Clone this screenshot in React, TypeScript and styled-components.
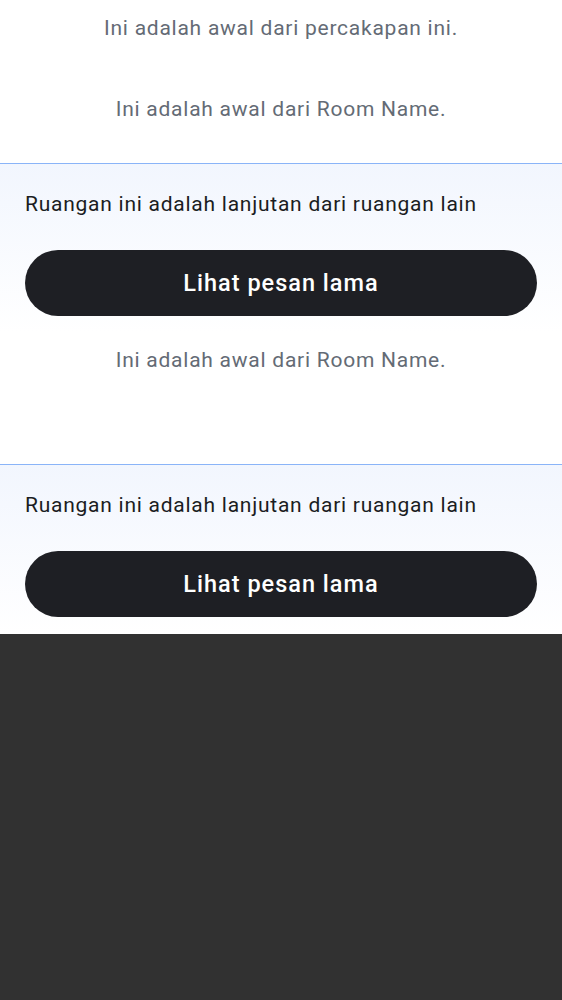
import React from "react";
import styled, { createGlobalStyle } from "styled-components";

const Global = createGlobalStyle`
  html, body {
    margin: 0;
    padding: 0;
    background: #313131;
  }
  body {
    font-family: Roboto, "Noto Sans", sans-serif;
    -webkit-font-smoothing: antialiased;
  }
`;

const Timeline = styled.div`
  display: flex;
  flex-direction: column;
  background: #ffffff;
`;

const Notice = styled.div<{ $top: number; $bottom: number }>`
  margin: ${(p) => p.$top}px 0 ${(p) => p.$bottom}px;
  text-align: center;
  font-size: 21px;
  line-height: 28px;
  color: #646b75;
  letter-spacing: 0.75px;
`;

const Predecessor = styled.section`
  display: flex;
  flex-direction: column;
  border-top: 1px solid #8ab4f8;
  background: linear-gradient(180deg, #f2f6fe 0%, #ffffff 100%);
  padding: 26px 25px 17px;
`;

const PredecessorText = styled.p`
  margin: 0 0 32px;
  font-size: 21px;
  line-height: 28px;
  color: #1b1d22;
  letter-spacing: 0.75px;
`;

const OldMessagesButton = styled.button`
  display: flex;
  align-items: center;
  justify-content: center;
  height: 66px;
  width: 100%;
  border: none;
  border-radius: 33px;
  background: #1e1f24;
  color: #ffffff;
  font-family: Roboto, "Noto Sans", sans-serif;
  font-size: 23.5px;
  font-weight: 500;
  letter-spacing: 1px;
  cursor: pointer;
`;

function PredecessorBlock() {
  return (
    <Predecessor>
      <PredecessorText>Ruangan ini adalah lanjutan dari ruangan lain</PredecessorText>
      <OldMessagesButton>Lihat pesan lama</OldMessagesButton>
    </Predecessor>
  );
}

export default function App() {
  return (
    <>
      <Global />
      <Timeline>
        <Notice $top={14} $bottom={53}>Ini adalah awal dari percakapan ini.</Notice>
        <Notice $top={0} $bottom={40}>Ini adalah awal dari Room Name.</Notice>
        <PredecessorBlock />
        <Notice $top={13} $bottom={90}>Ini adalah awal dari Room Name.</Notice>
        <PredecessorBlock />
      </Timeline>
    </>
  );
}
